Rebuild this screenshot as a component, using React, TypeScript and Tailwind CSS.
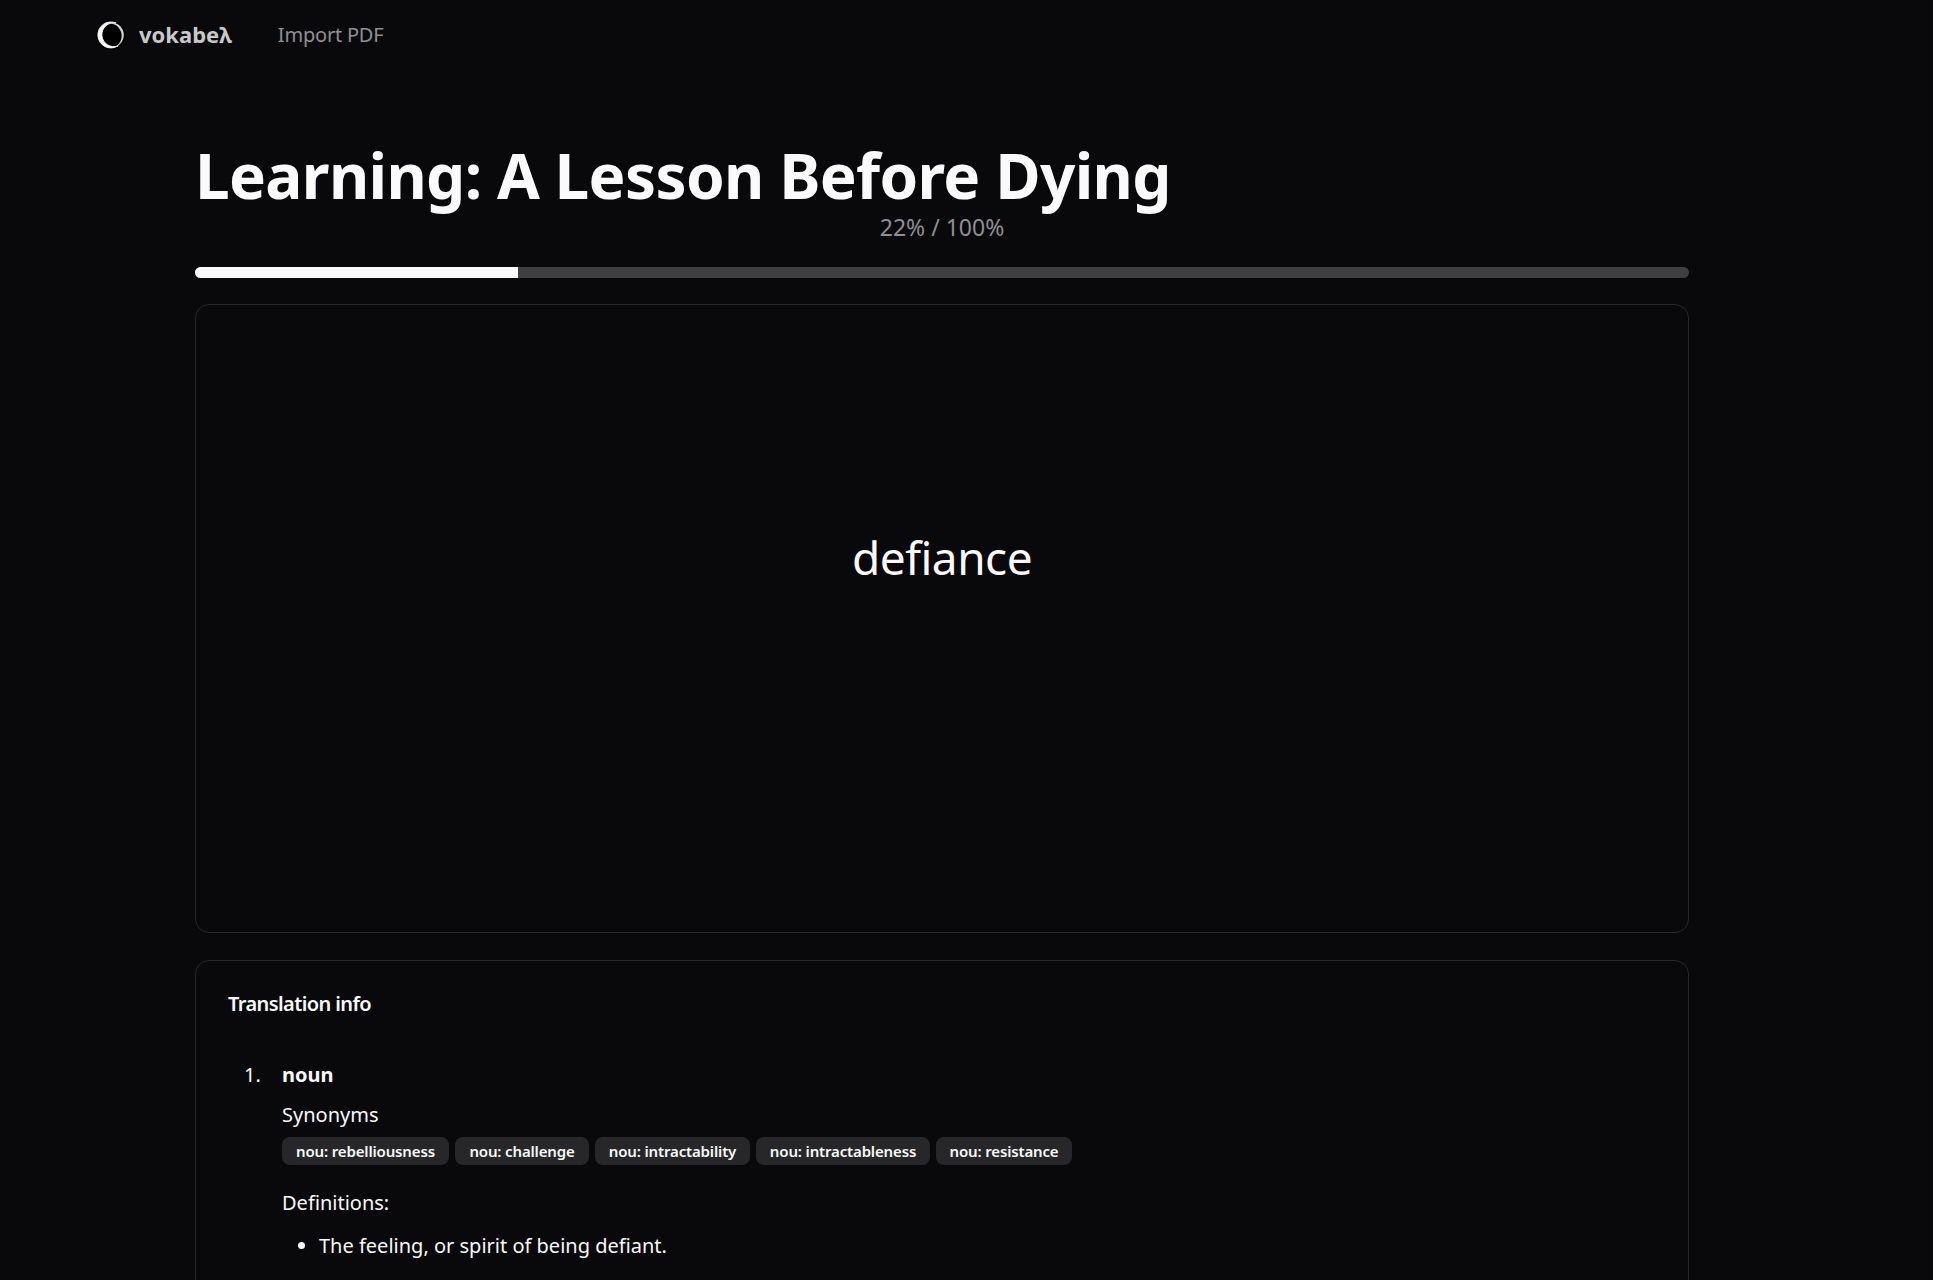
const font = "font-['Noto_Sans','Open_Sans',sans-serif]";

const synonyms = [
  { label: 'nou: rebelliousness', width: 'w-[167px]' },
  { label: 'nou: challenge', width: 'w-[134px]' },
  { label: 'nou: intractability', width: 'w-[155px]' },
  { label: 'nou: intractableness', width: 'w-[174px]' },
  { label: 'nou: resistance', width: 'w-[136px]' },
];

function Logo() {
  return (
    <svg width="30" height="30" viewBox="0 0 30 30" className="shrink-0" aria-hidden="true">
      <circle cx="15" cy="15" r="15" fill="#000" />
      <path fill="#fafafa" stroke="#fafafa" strokeWidth="0.9" d="M20 3A13 13 0 1 0 22 25.8A11.9 11.9 0 1 1 20 3Z" />
      <path fill="#d4d4d4" d="M10 3.5A12.7 12.7 0 1 1 18 27.5A12.7 12.7 0 0 0 10 3.5Z" />
    </svg>
  );
}

export default function App() {
  return (
    <div className={`min-h-screen h-[1280px] overflow-hidden bg-[#09090b] text-[#fafafa] ${font}`}>
      <nav className="flex h-[70px] items-center pl-[96px]">
        <a className="flex items-center gap-[13px]">
          <Logo />
          <span className="mt-[-2px] text-[22px] font-bold text-[#c8c8c9]">vokabeλ</span>
        </a>
        <a className="ml-[46px] text-[20px] tracking-[-0.2px] text-[#8f8f93]">Import PDF</a>
      </nav>

      <main className="ml-[195px] w-[1494px]">
        <h1 className="mt-[70px] text-[62px] leading-[70px] font-bold tracking-[-0.65px]">Learning: A Lesson Before Dying</h1>
        <p className="mt-[3px] text-center text-[23px] leading-[28px] text-[#8f8f93]">22% / 100%</p>

        <div className="mt-[26px] h-[11px] overflow-hidden rounded-full bg-[#3f3f42]">
          <div className="h-full w-[21.6%] bg-[#fafafa]" />
        </div>

        <section className="mt-[26px] flex h-[629px] items-center justify-center rounded-[14px] border border-[#27272a] pb-[122px]">
          <span className="text-[46px] tracking-[-0.5px]">defiance</span>
        </section>

        <section className="mt-[27px] h-[400px] rounded-[14px] border border-[#27272a] px-[32px] pt-[29px]">
          <h2 className="text-[20px] leading-[28px] font-semibold tracking-[-0.6px]">Translation info</h2>
          <ol className="mt-[43px] pl-[16px] text-[20px] leading-[28px]">
            <li className="flex">
              <span className="w-[38px] shrink-0">1.</span>
              <div>
                <strong className="font-bold">noun</strong>
                <p className="mt-[12px]">Synonyms</p>
                <div className="mt-[8px] flex gap-[6px]">
                  {synonyms.map((s) => (
                    <span
                      key={s.label}
                      className={`flex h-[28px] items-center justify-center rounded-[8px] bg-[#27272a] text-[15px] font-semibold tracking-[-0.15px] ${s.width}`}
                    >
                      {s.label}
                    </span>
                  ))}
                </div>
                <p className="mt-[24px]">Definitions:</p>
                <ul className="mt-[15px] list-disc pl-[37px]">
                  <li>The feeling, or spirit of being defiant.</li>
                </ul>
              </div>
            </li>
          </ol>
        </section>
      </main>
    </div>
  );
}
